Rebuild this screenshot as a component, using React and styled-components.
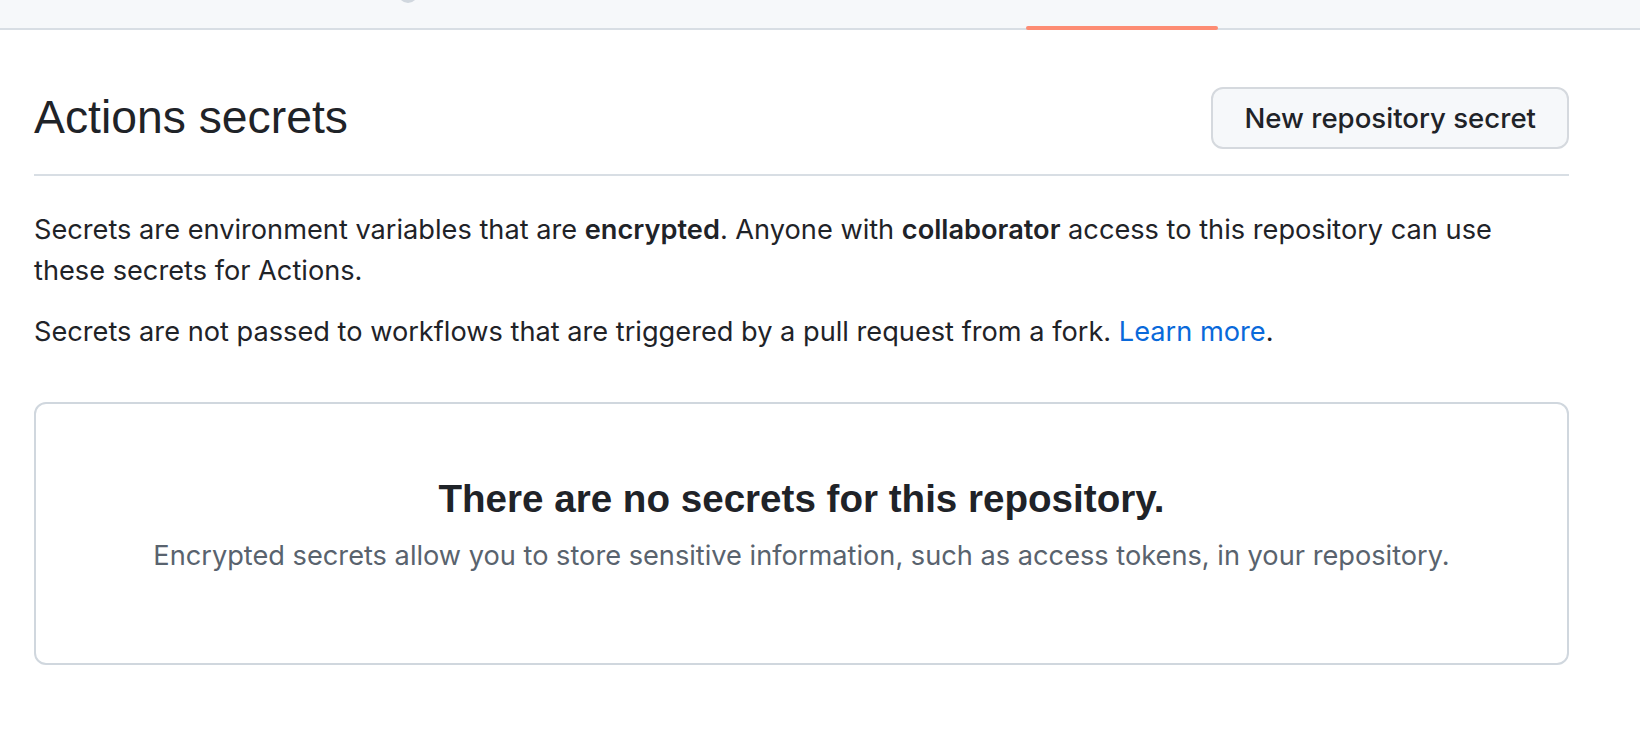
import styled, { createGlobalStyle } from "styled-components";

const GlobalStyle = createGlobalStyle`
  html, body {
    margin: 0;
    padding: 0;
    background: #ffffff;
  }
  body {
    font-family: Inter, "Liberation Sans", Arial, sans-serif;
    color: #1f2328;
  }
`;

function App() {
  return (
    <>
      <GlobalStyle />
      <TabBar>
        <CutIcon />
        <SelectedTab />
      </TabBar>
      <Page>
        <Subhead>
          <Heading>Actions secrets</Heading>
          <Button>New repository secret</Button>
        </Subhead>
        <Text>
          Secrets are environment variables that are <b>encrypted</b>. Anyone
          with <b>collaborator</b> access to this repository can use these
          secrets for Actions.
        </Text>
        <Text last>
          Secrets are not passed to workflows that are triggered by a pull
          request from a fork. <Link href="#">Learn more</Link>.
        </Text>
        <Blankslate>
          <BlankTitle>There are no secrets for this repository.</BlankTitle>
          <BlankText>
            Encrypted secrets allow you to store sensitive information, such as
            access tokens, in your repository.
          </BlankText>
        </Blankslate>
      </Page>
    </>
  );
}

const TabBar = styled.nav`
  height: 28px;
  background: #f6f8fa;
  border-bottom: 2px solid #d8dee4;
  display: flex;
  justify-content: space-between;
  align-items: flex-end;
  padding: 0 422px 0 398px;
`;

const CutIcon = styled.span`
  align-self: flex-start;
  width: 20px;
  height: 20px;
  margin-top: -17px;
  border-radius: 50%;
  background: #d0d7de;
`;

const SelectedTab = styled.span`
  width: 192px;
  height: 4px;
  margin-bottom: -2px;
  border-radius: 6px;
  background: #fd8c73;
`;

const Page = styled.main`
  width: 1535px;
  padding: 0 0 0 34px;
`;

const Subhead = styled.div`
  display: flex;
  align-items: center;
  justify-content: space-between;
  margin-top: 57px;
  padding-bottom: 25px;
  border-bottom: 2px solid #d8dee4;
`;

const Heading = styled.h2`
  margin: 0;
  font-family: "Liberation Sans", Arial, sans-serif;
  font-size: 46.3px;
  font-weight: 400;
  line-height: 1.25;
`;

const Button = styled.button`
  height: 62px;
  padding: 0 31px;
  font-family: Inter, "Liberation Sans", Arial, sans-serif;
  font-size: 27.6px;
  font-weight: 500;
  color: #1f2328;
  background: #f6f8fa;
  border: 2px solid #d5d9de;
  border-radius: 12px;
`;

const Text = styled.p`
  margin: ${(props) => (props.last ? "0" : "34px 0 21px")};
  font-size: 27.2px;
  line-height: 40.5px;
  b {
    font-weight: 600;
  }
`;

const Link = styled.a`
  color: #0969da;
  text-decoration: none;
`;

const Blankslate = styled.section`
  margin-top: 49px;
  height: 263px;
  border: 2px solid #d0d7de;
  border-radius: 12px;
  padding-top: 66px;
  box-sizing: border-box;
  text-align: center;
`;

const BlankTitle = styled.h3`
  margin: 0;
  font-family: "Liberation Sans", Arial, sans-serif;
  font-size: 38.6px;
  font-weight: 700;
  line-height: 58px;
`;

const BlankText = styled.p`
  margin: 8px 0 0;
  font-size: 27.2px;
  line-height: 40.5px;
  color: #59636e;
`;

export default App;
